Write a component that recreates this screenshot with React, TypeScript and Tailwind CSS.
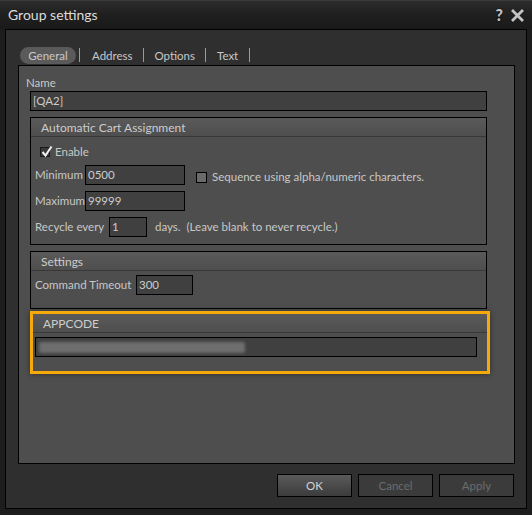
import React from "react";

const font = { fontFamily: 'Lato, "Liberation Sans", Arial, sans-serif' };

function Input({ value, className }: { value?: string; className: string }) {
  return (
    <div
      className={`h-[20px] border border-black bg-[#404040] text-[11.5px] leading-[18px] text-[#cccccc] pl-[2px] ${className}`}
    >
      {value}
    </div>
  );
}

function GroupHeader({ title }: { title: string }) {
  return (
    <div className="h-[19px] border-b border-[#383838] bg-gradient-to-b from-[#5a5a5a] to-[#4e4e4e] pl-[10px] text-[12px] leading-[19px] text-[#cccccc] whitespace-nowrap">
      {title}
    </div>
  );
}

export default function App() {
  return (
    <div
      className="w-[532px] h-[515px] bg-[#1d1d1d] flex flex-col border-t border-[#3a3a3a] whitespace-nowrap"
      style={font}
    >
      {/* Title bar */}
      <div className="h-[28px] flex items-center pl-[8px] pr-[6px] bg-gradient-to-b from-[#2c2c2c] via-[#1f1f1f] to-[#1a1a1a]">
        <div className="text-[14px] text-[#dcdcdc] flex-1 leading-[20px]">Group settings</div>
        <div className="flex items-center gap-[8px] mr-[2px]">
          <span className="text-[16px] font-black text-[#c4c4c4] leading-none [text-shadow:0_0_2px_#000]">?</span>
          <svg width="13" height="13" viewBox="0 0 13 13">
            <path d="M2 2 L11 11 M11 2 L2 11" stroke="#c4c4c4" strokeWidth="2.8" strokeLinecap="square" />
          </svg>
        </div>
      </div>

      {/* Content frame */}
      <div className="mx-[5px] mb-[6px] flex-1 border border-black bg-[#2f2f2f] flex flex-col">
        {/* Tabs */}
        <div className="mt-[17px] ml-[14px] h-[18px] flex items-start text-[11.5px] text-[#c8c8c8]">
          <div className="h-[17px] w-[56px] rounded-full bg-[#5a5a5a] flex items-center justify-center leading-[17px]">
            General
          </div>
          <div className="ml-[3px] w-px h-[14px] mt-[1px] bg-[#9a9a9a]" />
          <div className="ml-[12px] leading-[17px]">Address</div>
          <div className="ml-[10px] w-px h-[14px] mt-[1px] bg-[#9a9a9a]" />
          <div className="ml-[11px] leading-[17px]">Options</div>
          <div className="ml-[10px] w-px h-[14px] mt-[1px] bg-[#9a9a9a]" />
          <div className="ml-[11px] leading-[17px]">Text</div>
          <div className="ml-[11px] w-px h-[14px] mt-[1px] bg-[#9a9a9a]" />
        </div>

        {/* Tab panel */}
        <div className="ml-[12px] mr-[11px] h-[399px] border border-black bg-[#4e4e4e] flex flex-col text-[11.5px] text-[#c8c8c8]">
          <div className="mt-[10px] ml-[7px] leading-[14px]">Name</div>
          <Input value="[QA2]" className="mt-[1px] ml-[11px] w-[457px]" />

          {/* Automatic Cart Assignment */}
          <div className="mt-[6px] ml-[11px] w-[457px] h-[128px] border border-black flex flex-col">
            <GroupHeader title="Automatic Cart Assignment" />
            <div className="mt-[9px] ml-[9px] flex items-center h-[12px]">
              <div className="relative w-[10px] h-[10px] border border-[#1a1a1a] bg-[#3a3a3a]">
                <svg className="absolute -top-[3px] left-0" width="12" height="13" viewBox="0 0 12 13">
                  <path d="M1.5 7 L4.5 10.5 L10.5 1.5" stroke="#f0f0f0" strokeWidth="2" fill="none" />
                </svg>
              </div>
              <span className="ml-[5px] leading-[14px]">Enable</span>
            </div>
            <div className="mt-[7px] flex items-center">
              <span className="ml-[4px] w-[50px] leading-[14px]">Minimum</span>
              <Input value="0500" className="w-[100px]" />
              <div className="ml-[11px] mt-[4px] w-[11px] h-[11px] border border-black bg-[#6a6a6a]" />
              <span className="ml-[5px] mt-[4px] leading-[14px]">Sequence using alpha/numeric characters.</span>
            </div>
            <div className="mt-[6px] flex items-center">
              <span className="ml-[4px] w-[50px] leading-[14px]">Maximum</span>
              <Input value="99999" className="w-[100px]" />
            </div>
            <div className="mt-[6px] flex items-center">
              <span className="ml-[4px] w-[74px] leading-[14px]">Recycle every</span>
              <Input value="1" className="w-[38px]" />
              <span className="ml-[8px] leading-[14px]">days.</span>
              <span className="ml-[6px] leading-[14px]">(Leave blank to never recycle.)</span>
            </div>
          </div>

          {/* Settings */}
          <div className="mt-[6px] ml-[11px] w-[457px] h-[58px] border border-black flex flex-col">
            <GroupHeader title="Settings" />
            <div className="mt-[4px] flex items-center">
              <span className="ml-[4px] w-[101px] leading-[14px]">Command Timeout</span>
              <Input value="300" className="w-[57px]" />
            </div>
          </div>

          {/* APPCODE */}
          <div className="mt-[2px] ml-[11px] w-[460px] h-[63px] border-[3px] border-[#f5aa0a] flex flex-col shadow-[0_0_6px_rgba(0,0,0,0.4)]">
            <GroupHeader title="APPCODE" />
            <div className="mt-[4px] ml-[2px] w-[442px] h-[20px] border border-black bg-[#404040] flex items-center">
              <div className="ml-[3px] w-[206px] h-[11px] bg-[#6e6e6e] blur-[1.5px] rounded-[2px]" />
            </div>
          </div>
        </div>

        {/* Buttons */}
        <div className="mt-[10px] mr-[12px] flex justify-end gap-[6px] text-[11.5px]">
          <div className="w-[75px] h-[23px] border border-black bg-gradient-to-b from-[#5a5a5a] to-[#3c3c3c] flex items-center justify-center text-[#d4d4d4]">
            OK
          </div>
          <div className="w-[75px] h-[23px] border border-black bg-[#3b3b3b] flex items-center justify-center text-[#6c6c6c]">
            Cancel
          </div>
          <div className="w-[75px] h-[23px] border border-black bg-[#3b3b3b] flex items-center justify-center text-[#6c6c6c]">
            Apply
          </div>
        </div>
      </div>
    </div>
  );
}
